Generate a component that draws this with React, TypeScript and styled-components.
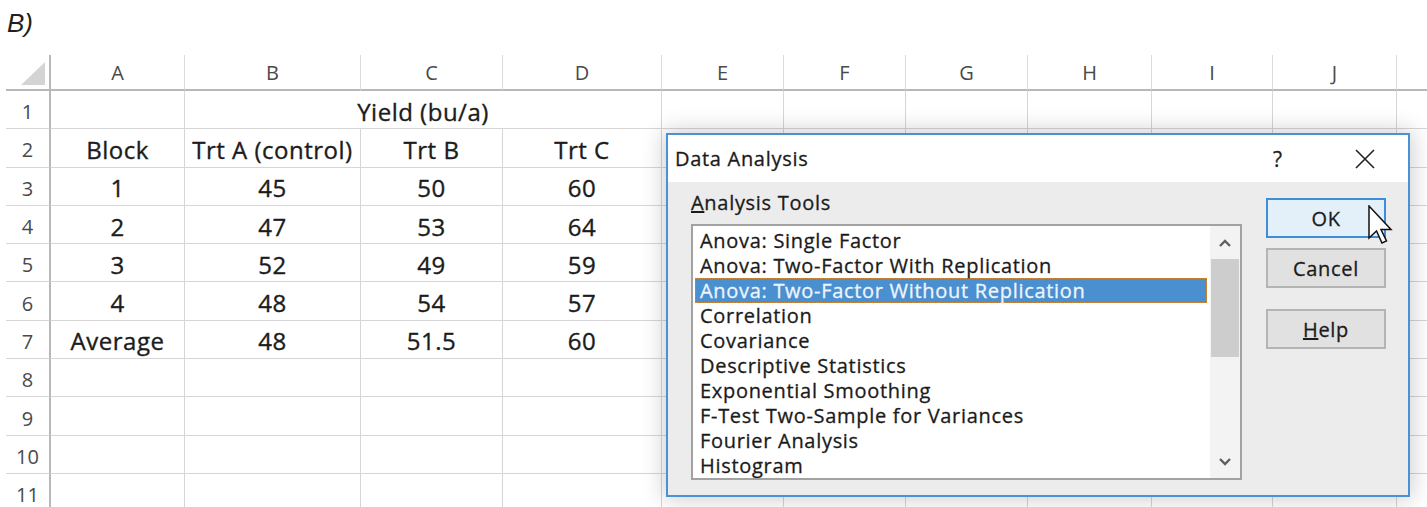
import React from "react";
import styled, { createGlobalStyle } from "styled-components";

const Global = createGlobalStyle`
  html, body { margin: 0; padding: 0; background: #ffffff; }
  body { width: 1427px; height: 507px; overflow: hidden; }
`;

const Page = styled.div`
  position: relative;
  width: 1427px;
  height: 507px;
  overflow: hidden;
  background: #ffffff;
`;

const Caption = styled.div`
  box-sizing: border-box;
  height: 55px;
  padding: 10px 0 0 7px;
  font-family: "Liberation Sans", Arial, sans-serif;
  font-style: italic;
  font-size: 26px;
  line-height: 1;
  color: #231f20;
`;

/* ---------- worksheet ---------- */

const Sheet = styled.div`
  margin-left: 6px;
  display: grid;
  grid-template-columns: 45px 134px 176px 142px 159px 122px 122px 122px 124px 121px 124px 40px;
  grid-template-rows: 36px repeat(11, 38.3px);
  font-family: "Open Sans", "Noto Sans", sans-serif;
`;

const Corner = styled.div`
  box-sizing: border-box;
  border-right: 2px solid #b8b8b8;
  border-bottom: 2px solid #b8b8b8;
  display: flex;
  align-items: flex-end;
  justify-content: flex-end;
  padding: 0 4px 4px 0;
`;

const ColHead = styled.div`
  box-sizing: border-box;
  border-right: 1px solid #dadada;
  border-bottom: 2px solid #b8b8b8;
  display: flex;
  align-items: center;
  justify-content: center;
  font-size: 20px;
  color: #4a4a4a;
`;

const RowHead = styled.div`
  box-sizing: border-box;
  border-right: 2px solid #b8b8b8;
  border-bottom: 1px solid #d6d6d6;
  display: flex;
  align-items: center;
  justify-content: center;
  padding-top: 4px;
  font-size: 20px;
  color: #4a4a4a;
`;

const Cell = styled.div<{ $span?: number }>`
  box-sizing: border-box;
  grid-column: span ${(p) => p.$span ?? 1};
  border-right: 1px solid #d6d6d6;
  border-bottom: 1px solid #d6d6d6;
  display: flex;
  align-items: center;
  justify-content: center;
  padding-top: 3px;
  font-size: 24px;
  letter-spacing: 0.5px;
  -webkit-text-stroke: 0.35px currentColor;
  color: #1c1c1c;
  white-space: nowrap;
  overflow: hidden;
`;

/* ---------- dialog ---------- */

const Dialog = styled.div`
  position: absolute;
  left: 666px;
  top: 133px;
  width: 744px;
  height: 364px;
  box-sizing: border-box;
  border: 2px solid #4a92d6;
  background: #ececec;
  box-shadow: 0 0 22px 2px rgba(0, 0, 0, 0.2);
  display: flex;
  flex-direction: column;
  font-family: "Open Sans", "Noto Sans", sans-serif;
  font-size: 20px;
  letter-spacing: 0.7px;
  -webkit-text-stroke: 0.3px currentColor;
  color: #1b1b1b;
`;

const TitleBar = styled.div`
  height: 47px;
  flex: none;
  background: #ffffff;
  display: flex;
  align-items: center;
  padding: 0 23px 0 7px;
`;

const Title = styled.div`
  flex: 1;
`;

const TitleButton = styled.div<{ $gap?: number }>`
  width: 40px;
  height: 40px;
  margin-left: ${(p) => p.$gap ?? 0}px;
  display: flex;
  align-items: center;
  justify-content: center;
  font-size: 21px;
  color: #222;
`;

const Body = styled.div`
  flex: 1;
  display: flex;
  padding: 9px 22px 18px 23px;
`;

const ToolsColumn = styled.div`
  display: flex;
  flex-direction: column;
  width: 551px;
`;

const Label = styled.div`
  height: 24px;
  line-height: 24px;
  margin-bottom: 9px;
`;

const ListBox = styled.div`
  flex: 1;
  box-sizing: border-box;
  border: 2px solid #a2a2a2;
  background: #ffffff;
  display: flex;
  overflow: hidden;
`;

const Items = styled.div`
  flex: 1;
  padding: 2px 3px 0 2px;
  overflow: hidden;
`;

const Item = styled.div<{ $selected?: boolean }>`
  box-sizing: border-box;
  height: 25px;
  line-height: 23px;
  padding-left: 4px;
  white-space: nowrap;
  border: 1px ${(p) => (p.$selected ? "dotted #d08a3c" : "solid transparent")};
  background: ${(p) => (p.$selected ? "#4a8fcf" : "transparent")};
  color: ${(p) => (p.$selected ? "#eef5fc" : "#1b1b1b")};
`;

const ScrollBar = styled.div`
  width: 30px;
  flex: none;
  background: #f3f3f3;
  display: flex;
  flex-direction: column;
`;

const ScrollArrow = styled.div`
  height: 33px;
  flex: none;
  display: flex;
  align-items: center;
  justify-content: center;
`;

const Thumb = styled.div`
  height: 98px;
  margin: 0 1px;
  background: #cdcdcd;
`;

const Spacer = styled.div`
  flex: 1;
`;

const ButtonColumn = styled.div`
  margin-left: 24px;
  padding-top: 7px;
  width: 120px;
  display: flex;
  flex-direction: column;
`;

const Button = styled.div<{ $primary?: boolean; $gap?: number }>`
  box-sizing: border-box;
  height: 40px;
  margin-top: ${(p) => p.$gap ?? 0}px;
  border: 2px solid ${(p) => (p.$primary ? "#3c8ed8" : "#b4b4b4")};
  background: ${(p) => (p.$primary ? "#e3f0fa" : "#e1e1e1")};
  display: flex;
  align-items: center;
  justify-content: center;
`;

const Pointer = styled.svg`
  position: absolute;
  left: 700px;
  top: 70px;
`;

const Chevron = ({ up }: { up?: boolean }) => (
  <svg width="14" height="10" viewBox="0 0 14 10">
    <polyline
      points={up ? "2,8 7,3 12,8" : "2,2 7,7 12,2"}
      fill="none"
      stroke="#5f5f5f"
      strokeWidth="2.4"
    />
  </svg>
);

const tools = [
  "Anova: Single Factor",
  "Anova: Two-Factor With Replication",
  "Anova: Two-Factor Without Replication",
  "Correlation",
  "Covariance",
  "Descriptive Statistics",
  "Exponential Smoothing",
  "F-Test Two-Sample for Variances",
  "Fourier Analysis",
  "Histogram",
];

const letters = ["A", "B", "C", "D", "E", "F", "G", "H", "I", "J", ""];

const rows: string[][] = [
  ["Block", "Trt A (control)", "Trt B", "Trt C"],
  ["1", "45", "50", "60"],
  ["2", "47", "53", "64"],
  ["3", "52", "49", "59"],
  ["4", "48", "54", "57"],
  ["Average", "48", "51.5", "60"],
  [],
  [],
  [],
  [],
];

const blanks = (n: number, key: string) =>
  Array.from({ length: n }, (_, i) => <Cell key={`${key}-${i}`} />);

export default function App() {
  return (
    <Page>
      <Global />
      <Caption>B)</Caption>
      <Sheet>
        <Corner>
          <svg width="24" height="23" viewBox="0 0 24 23">
            <polygon points="24,0 24,23 0,23" fill="#d4d4d4" />
          </svg>
        </Corner>
        {letters.map((l, i) => (
          <ColHead key={`h${i}`}>{l}</ColHead>
        ))}

        <RowHead>1</RowHead>
        <Cell />
        <Cell $span={3}>Yield (bu/a)</Cell>
        {blanks(7, "r1")}

        {rows.map((r, ri) => (
          <React.Fragment key={`r${ri}`}>
            <RowHead>{ri + 2}</RowHead>
            {r.map((v, ci) => (
              <Cell key={`c${ri}-${ci}`}>{v}</Cell>
            ))}
            {blanks(11 - r.length, `b${ri}`)}
          </React.Fragment>
        ))}
      </Sheet>

      <Dialog>
        <TitleBar>
          <Title>Data Analysis</Title>
          <TitleButton>?</TitleButton>
          <TitleButton $gap={47}>
            <svg width="20" height="20" viewBox="0 0 20 20">
              <path d="M1 1 L19 19 M19 1 L1 19" stroke="#222" strokeWidth="1.6" />
            </svg>
          </TitleButton>
        </TitleBar>
        <Body>
          <ToolsColumn>
            <Label>
              <u>A</u>nalysis Tools
            </Label>
            <ListBox>
              <Items>
                {tools.map((t, i) => (
                  <Item key={t} $selected={i === 2}>
                    {t}
                  </Item>
                ))}
              </Items>
              <ScrollBar>
                <ScrollArrow>
                  <Chevron up />
                </ScrollArrow>
                <Thumb />
                <Spacer />
                <ScrollArrow>
                  <Chevron />
                </ScrollArrow>
              </ScrollBar>
            </ListBox>
          </ToolsColumn>
          <ButtonColumn>
            <Button $primary>OK</Button>
            <Button $gap={10}>Cancel</Button>
            <Button $gap={21}>
              <span>
                <u>H</u>elp
              </span>
            </Button>
          </ButtonColumn>
        </Body>
        <Pointer width="26" height="40" viewBox="0 0 26 40">
          <polygon
            points="1,1 1,33 8.5,26 14,38 18.5,36 13,24.5 23,24.5"
            fill="#ffffff"
            stroke="#111"
            strokeWidth="1.5"
            strokeLinejoin="miter"
          />
        </Pointer>
      </Dialog>
    </Page>
  );
}
